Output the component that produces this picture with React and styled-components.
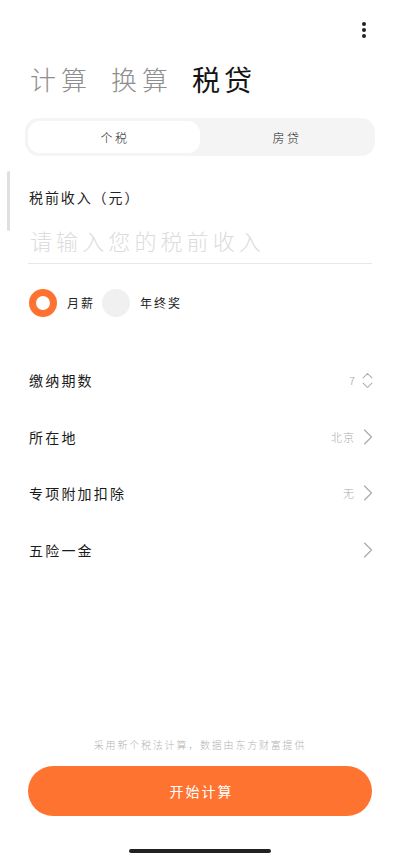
import React from "react";
import styled, { createGlobalStyle } from "styled-components";
import { ChevronRight, ChevronsUpDown } from "lucide-react";

const GlobalStyle = createGlobalStyle`
  html, body {
    margin: 0;
    padding: 0;
    background: #fff;
  }
  * {
    box-sizing: border-box;
  }
`;

const Page = styled.div`
  position: relative;
  width: 400px;
  height: 859px;
  padding: 0 28px;
  display: flex;
  flex-direction: column;
  overflow: hidden;
  background: #fff;
  color: #111;
  font-family: "Noto Sans CJK SC", "Noto Sans", sans-serif;
  font-weight: 400;
`;

const ScrollThumb = styled.div`
  position: absolute;
  left: 7px;
  top: 171px;
  width: 3px;
  height: 60px;
  border-radius: 2px;
  background: #e0e0e0;
`;

const TopBar = styled.div`
  height: 60px;
  display: flex;
  justify-content: flex-end;
  padding: 22px 6px 0 0;
`;

const Dots = styled.div`
  display: flex;
  flex-direction: column;
  gap: 2px;
  span {
    width: 4px;
    height: 4px;
    border-radius: 50%;
    background: #222;
  }
`;

const Titles = styled.div`
  display: flex;
  align-items: center;
  height: 38px;
  padding-left: 2px;
  gap: 19px;
`;

const TitleItem = styled.span`
  font-size: ${(p) => (p.$active ? 28 : 26)}px;
  line-height: 38px;
  letter-spacing: ${(p) => (p.$active ? 4 : 5)}px;
  font-weight: ${(p) => (p.$active ? 400 : 300)};
  color: ${(p) => (p.$active ? "#151515" : "#8e8e8e")};
  white-space: nowrap;
`;

const Segment = styled.div`
  margin: 20px -3px 0;
  height: 38px;
  padding: 3px;
  display: flex;
  background: #f4f4f4;
  border-radius: 14px;
`;

const SegmentTab = styled.div`
  flex: 1;
  display: flex;
  align-items: center;
  justify-content: center;
  padding-left: 2px;
  font-size: 12px;
  letter-spacing: 2.5px;
  font-weight: 300;
  color: #222;
  border-radius: 12px;
  background: ${(p) => (p.$active ? "#fff" : "transparent")};
`;

const FieldLabel = styled.div`
  margin-top: 31px;
  padding-left: 1px;
  font-size: 14px;
  line-height: 20px;
  letter-spacing: 1.9px;
  color: #222;
`;

const AmountInput = styled.input`
  display: block;
  width: 100%;
  height: 47px;
  margin-top: 10px;
  padding: 0 0 0 2px;
  border: 0;
  border-bottom: 1px solid #e8e8e8;
  outline: none;
  background: transparent;
  font-family: inherit;
  font-size: 22px;
  font-weight: 300;
  letter-spacing: 4.1px;
  &::placeholder {
    color: #dcdcdc;
    opacity: 1;
  }
`;

const RadioRow = styled.div`
  display: flex;
  align-items: center;
  margin-top: 25px;
  padding-left: 1px;
`;

const RadioDot = styled.span`
  width: 28px;
  height: 28px;
  border-radius: 50%;
  flex-shrink: 0;
  background: ${(p) => (p.$checked ? "#fff" : "#f0f0f0")};
  border: ${(p) => (p.$checked ? "7.5px solid #ff7330" : "0")};
`;

const RadioText = styled.span`
  margin: -1px 7px 0 10px;
  font-size: 12px;
  letter-spacing: 2px;
  color: #222;
`;

const OptionList = styled.div`
  margin-top: 35px;
  display: flex;
  flex-direction: column;
`;

const OptionRow = styled.div`
  height: 56.5px;
  display: flex;
  align-items: center;
  justify-content: space-between;
  padding-left: 1px;
`;

const OptionName = styled.span`
  font-size: 14px;
  letter-spacing: 2.2px;
  color: #1a1a1a;
`;

const OptionValue = styled.span`
  display: flex;
  align-items: center;
  font-size: 11px;
  font-weight: 300;
  letter-spacing: 1px;
  color: #a8a8a8;
`;

const NextIcon = styled(ChevronRight)`
  color: #aaa;
  margin: 0 -10px 0 -1px;
`;

const StepperIcon = styled(ChevronsUpDown)`
  color: #aaa;
  margin: 0 -6px 0 1px;
`;

const Footer = styled.div`
  margin-top: auto;
  display: flex;
  flex-direction: column;
  align-items: center;
`;

const Note = styled.div`
  font-size: 10px;
  line-height: 14px;
  font-weight: 300;
  letter-spacing: 1.8px;
  color: #b4b4b4;
  white-space: nowrap;
`;

const StartButton = styled.button`
  width: 100%;
  height: 50px;
  margin-top: 14px;
  padding: 0 0 0 3px;
  border: 0;
  border-radius: 25px;
  background: #ff7330;
  color: #fff;
  font-family: inherit;
  font-size: 14px;
  letter-spacing: 2px;
`;

const HomeBar = styled.div`
  width: 142px;
  height: 4px;
  margin: 33px 0 6px;
  border-radius: 2px;
  background: #222;
`;

const options = [
  { name: "缴纳期数", value: "7", stepper: true },
  { name: "所在地", value: "北京" },
  { name: "专项附加扣除", value: "无" },
  { name: "五险一金", value: "" },
];

export default function App() {
  return (
    <Page>
      <GlobalStyle />
      <ScrollThumb />
      <TopBar>
        <Dots>
          <span />
          <span />
          <span />
        </Dots>
      </TopBar>
      <Titles>
        <TitleItem>计算</TitleItem>
        <TitleItem>换算</TitleItem>
        <TitleItem $active>税贷</TitleItem>
      </Titles>
      <Segment>
        <SegmentTab $active>个税</SegmentTab>
        <SegmentTab>房贷</SegmentTab>
      </Segment>
      <FieldLabel>税前收入（元）</FieldLabel>
      <AmountInput placeholder="请输入您的税前收入" readOnly />
      <RadioRow>
        <RadioDot $checked />
        <RadioText>月薪</RadioText>
        <RadioDot />
        <RadioText>年终奖</RadioText>
      </RadioRow>
      <OptionList>
        {options.map((o) => (
          <OptionRow key={o.name}>
            <OptionName>{o.name}</OptionName>
            <OptionValue>
              {o.value}
              {o.stepper ? (
                <StepperIcon size={21} strokeWidth={1.2} />
              ) : (
                <NextIcon size={28} strokeWidth={1} />
              )}
            </OptionValue>
          </OptionRow>
        ))}
      </OptionList>
      <Footer>
        <Note>采用新个税法计算，数据由东方财富提供</Note>
        <StartButton>开始计算</StartButton>
        <HomeBar />
      </Footer>
    </Page>
  );
}
